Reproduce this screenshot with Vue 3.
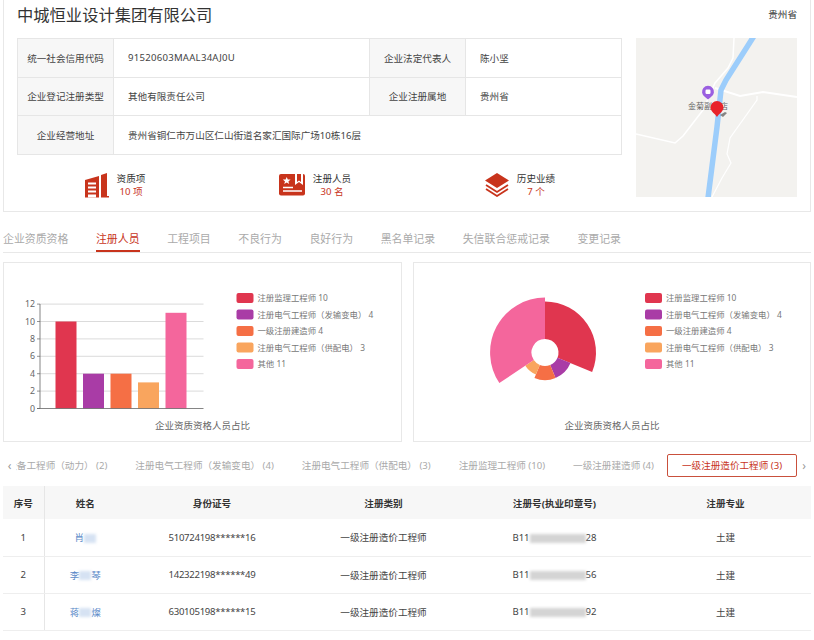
<template>
  <div class="page">
    <section class="company">
      <header class="company-head">
        <h1>中城恒业设计集团有限公司</h1>
        <span class="province">贵州省</span>
      </header>
      <div class="company-body">
        <div class="company-info">
          <table class="info-table">
            <colgroup>
              <col style="width: 96px" />
              <col style="width: 256px" />
              <col style="width: 96px" />
              <col />
            </colgroup>
            <tbody>
              <tr>
                <th>统一社会信用代码</th>
                <td class="code">91520603MAAL34AJ0U</td>
                <th>企业法定代表人</th>
                <td>陈小坚</td>
              </tr>
              <tr>
                <th>企业登记注册类型</th>
                <td>其他有限责任公司</td>
                <th>企业注册属地</th>
                <td>贵州省</td>
              </tr>
              <tr>
                <th>企业经营地址</th>
                <td colspan="3">贵州省铜仁市万山区仁山街道名家汇国际广场10栋16层</td>
              </tr>
            </tbody>
          </table>
          <div class="stats">
            <div class="stat">
              <svg class="stat-icon" width="24" height="26" viewBox="0 0 24 26">
                <path fill="#c8341c" d="M0 8 14 4V25.500H0z" />
                <path fill="#fff" d="M3 10.500h8v2H3zM3 14.500h8v2H3zM3 18.500h8v2H3zM3 22.500h8v3H3z" />
                <path fill="#c8341c" d="M16 3 22 1V24h2v1.500H16z" />
              </svg>
              <div class="stat-text"><span>资质项</span><b>10 项</b></div>
            </div>
            <div class="stat">
              <svg class="stat-icon" width="26" height="22" viewBox="0 0 26 22">
                <rect width="26" height="21.500" rx="2" fill="#c8341c" />
                <path fill="#fff" d="M16 0h8v11l-4-3-4 3z" />
                <path fill="#c8341c" d="M18 0h4v8l-2-1.500L18 8z" />
                <path fill="#fff" d="M7.700 3 8.800 5.600h2.800L9.400 7.400l.8 2.700-2.500-1.600-2.500 1.600.8-2.700L3.800 5.600h2.800zM4 12.800h10v1.500H4zM4 16.300h19v1.500H4z" />
              </svg>
              <div class="stat-text"><span>注册人员</span><b>30 名</b></div>
            </div>
            <div class="stat">
              <svg class="stat-icon" width="24" height="24" viewBox="0 0 24 24">
                <path fill="#c8341c" d="M12 0 24 7.500 12 15 0 7.500z" />
                <path fill="none" stroke="#c8341c" stroke-width="1.800" d="M1 12l11 7 11-7M1 16l11 7 11-7" />
              </svg>
              <div class="stat-text"><span>历史业绩</span><b>7 个</b></div>
            </div>
          </div>
        </div>
        <svg class="map" width="161" height="159" viewBox="0 0 161 159">
          <rect width="161" height="159" fill="#f3f2ef" />
          <g fill="none" stroke="#fff">
            <path stroke-width="1.500" d="M98 0 97 20 92 30 79 45 67 72 47 98 39 105 0 96" />
            <path stroke-width="2" d="M79 50 104 58 127 54 161 59" />
            <path stroke-width="1.200" d="M121 58V62L94 100 91 116 95 125 86 140 76 159" />
          </g>
          <path fill="none" stroke="#9ccdfb" stroke-width="5.500" d="M118 -2 90 42 85 52 81 89 72 160" />
          <path fill="#9a5fe0" d="M72 61.500 69 59a6 6 0 1 1 6 0z" />
          <rect x="69.500" y="51.500" width="5" height="4.500" rx="1.200" fill="#fff" />
          <text class="map-label" x="52" y="71">金菊副食店</text>
          <path fill="#555" opacity=".7" d="M84 77l5-3 2 1-4 4z" />
          <path fill="#e8232a" d="M81 79c-1.500-3-6.500-5.500-6.500-9.500a6.500 6.500 0 0 1 13 0c0 4-5 6.500-6.500 9.500z" />
        </svg>
      </div>
    </section>

    <nav class="tabs">
      <a v-for="tab in tabs" :key="tab" :class="{ active: tab === '注册人员' }">{{ tab }}</a>
    </nav>

    <div class="charts">
      <div class="chart-panel">
        <svg width="396" height="178" viewBox="0 0 396 178">
          <g v-for="tick in ticks" :key="tick">
            <line v-if="tick > 0" x1="36" x2="199.500" :y1="tickY(tick)" :y2="tickY(tick)" stroke="#ccc" stroke-width=".7" />
            <line x1="33" x2="36" :y1="tickY(tick)" :y2="tickY(tick)" stroke="#666" stroke-width=".7" />
            <text class="axis-label" x="31" :y="tickY(tick) + 3">{{ tick }}</text>
          </g>
          <rect
            v-for="(item, i) in legend"
            :key="item.name"
            :x="51.500 + i * 27.500"
            :y="tickY(item.value)"
            width="21"
            :height="item.value * barUnit"
            :fill="item.color"
          />
          <line x1="36" x2="36" y1="41" y2="145.500" stroke="#666" stroke-width=".8" />
          <line x1="33" x2="199.500" y1="145.500" y2="145.500" stroke="#666" stroke-width=".8" />
          <g v-for="(item, i) in legend" :key="item.name">
            <rect x="232.500" :y="30 + i * 16.500" width="17" height="10" rx="2" :fill="item.color" />
            <text class="legend-label" x="253.500" :y="38 + i * 16.500" xml:space="preserve">{{ item.name }}</text>
          </g>
          <text class="chart-title" x="198.500" y="166">企业资质资格人员占比</text>
        </svg>
      </div>
      <div class="chart-panel">
        <svg width="396" height="178" viewBox="0 0 396 178">
          <path v-for="seg in roseSegments" :key="seg.name" :d="seg.d" :fill="seg.color" />
          <g v-for="(item, i) in legend" :key="item.name">
            <rect x="231" :y="30 + i * 16.500" width="17" height="10" rx="2" :fill="item.color" />
            <text class="legend-label" x="252" :y="38 + i * 16.500" xml:space="preserve">{{ item.name }}</text>
          </g>
          <text class="chart-title" x="198" y="166">企业资质资格人员占比</text>
        </svg>
      </div>
    </div>

    <div class="sub-tabs">
      <span class="arrow">‹</span>
      <div class="sub-tab-strip">
        <a v-for="t in subTabs" :key="t" :class="{ active: t === activeSubTab }">{{ t }}</a>
      </div>
      <span class="arrow arrow-next">›</span>
    </div>

    <table class="people">
      <colgroup>
        <col style="width: 41px" />
        <col style="width: 82px" />
        <col style="width: 172px" />
        <col style="width: 171px" />
        <col style="width: 171px" />
        <col />
      </colgroup>
      <thead>
        <tr>
          <th>序号</th>
          <th>姓名</th>
          <th>身份证号</th>
          <th>注册类别</th>
          <th>注册号(执业印章号)</th>
          <th>注册专业</th>
        </tr>
      </thead>
      <tbody>
        <tr v-for="(p, i) in people" :key="p.id">
          <td>{{ i + 1 }}</td>
          <td class="name">{{ p.first }}<i class="name-mask"></i>{{ p.last }}</td>
          <td class="id-no">{{ p.id }}</td>
          <td>一级注册造价工程师</td>
          <td>B11<i class="reg-mask"></i>{{ p.reg }}</td>
          <td>土建</td>
        </tr>
      </tbody>
    </table>
  </div>
</template>

<script setup>
import { computed } from 'vue';

const tabs = ['企业资质资格', '注册人员', '工程项目', '不良行为', '良好行为', '黑名单记录', '失信联合惩戒记录', '变更记录'];

const subTabs = [
  '注册设备工程师（动力） (2)',
  '注册电气工程师（发输变电） (4)',
  '注册电气工程师（供配电） (3)',
  '注册监理工程师 (10)',
  '一级注册建造师 (4)',
  '一级注册造价工程师 (3)',
];
const activeSubTab = subTabs[5];

const legend = [
  { name: '注册监理工程师 10', value: 10, color: '#e0364f' },
  { name: '注册电气工程师（发输变电） 4', value: 4, color: '#a93ca6' },
  { name: '一级注册建造师 4', value: 4, color: '#f56f45' },
  { name: '注册电气工程师（供配电） 3', value: 3, color: '#f9a55e' },
  { name: '其他 11', value: 11, color: '#f4669c' },
];

const people = [
  { first: '肖', last: '', id: '510724198******16', reg: '28' },
  { first: '李', last: '琴', id: '142322198******49', reg: '56' },
  { first: '蒋', last: '燦', id: '630105198******15', reg: '92' },
];

const ticks = [0, 2, 4, 6, 8, 10, 12];
const barUnit = 8.7;
const tickY = (v) => 145.5 - v * barUnit;

const polar = (cx, cy, r, deg) => {
  const a = (deg * Math.PI) / 180;
  return [(cx + r * Math.sin(a)).toFixed(2), (cy - r * Math.cos(a)).toFixed(2)];
};

// rose chart: angle follows the value, and so does the outer radius
const roseSegments = computed(() => {
  const cx = 131;
  const cy = 89.5;
  const inner = 13.5;
  const total = legend.reduce((sum, item) => sum + item.value, 0);
  let start = 0;
  return legend.map((item) => {
    const end = start + (item.value / total) * 360;
    const outer = 12 + 3.9 * item.value;
    const large = end - start > 180 ? 1 : 0;
    const p1 = polar(cx, cy, outer, start);
    const p2 = polar(cx, cy, outer, end);
    const p3 = polar(cx, cy, inner, end);
    const p4 = polar(cx, cy, inner, start);
    const d = `M${p1}A${outer} ${outer} 0 ${large} 1 ${p2}L${p3}A${inner} ${inner} 0 ${large} 0 ${p4}Z`;
    start = end;
    return { name: item.name, color: item.color, d };
  });
});
</script>

<style>
body {
  background: #fff;
}
</style>

<style scoped>
.page {
  width: 814px;
  height: 640px;
  overflow: hidden;
  padding: 0 3px;
  box-sizing: border-box;
  font-family: "Noto Sans", "Noto Sans CJK SC", sans-serif;
  font-size: 9.6px;
  color: #444;
}
.company {
  border: 1px solid #e8e8e8;
  border-top: 0;
  padding: 0 13px 14px;
  height: 212px;
  box-sizing: border-box;
}
.company-head {
  height: 38px;
  padding-bottom: 10px;
  box-sizing: border-box;
  display: flex;
  align-items: center;
  justify-content: space-between;
}
.company-head h1 {
  margin: 0;
  font-size: 16.3px;
  font-weight: 400;
  color: #333;
}
.province {
  color: #333;
}
.company-body {
  display: flex;
  gap: 14px;
}
.company-info {
  width: 605px;
}
.map {
  display: block;
  flex: none;
}
.map-label {
  font-size: 8px;
  fill: #666;
}
.info-table {
  width: 605px;
  table-layout: fixed;
  border-collapse: collapse;
}
.info-table th,
.info-table td {
  height: 38.5px;
  padding: 0;
  box-sizing: border-box;
  border: 1px solid #e6e6e6;
}
.info-table th {
  background: #f7f7f7;
  font-weight: 400;
  text-align: center;
}
.info-table td {
  padding-left: 14px;
}
.info-table td.code {
  letter-spacing: .25px;
}
.stats {
  display: grid;
  grid-template-columns: 200px 200px 210px;
  margin: 17px 0 0 -2px;
}
.stat {
  display: flex;
  align-items: center;
  justify-content: center;
  gap: 8px;
}
.stat-icon {
  flex: none;
}
.stat-text {
  display: flex;
  flex-direction: column;
  align-items: center;
  line-height: 13px;
  color: #333;
}
.stat-text b {
  font-weight: 400;
  color: #c8341c;
}
.tabs {
  display: flex;
  gap: 27.600px;
  height: 25px;
  margin-top: 15px;
  border-bottom: 1px solid #e8e8e8;
  font-size: 10.900px;
  color: #aaa;
}
.tabs a {
  height: 25px;
  line-height: 24px;
  box-sizing: border-box;
}
.tabs a.active {
  color: #c8341c;
  border-bottom: 2px solid #c8341c;
}
.charts {
  display: flex;
  gap: 11px;
  margin-top: 9px;
}
.chart-panel {
  flex: 1 1 0;
  min-width: 0;
  height: 180px;
  box-sizing: border-box;
  border: 1px solid #e8e8e8;
}
.chart-panel svg {
  display: block;
}
.axis-label {
  font-size: 8.800px;
  fill: #666;
  text-anchor: end;
}
.legend-label {
  font-size: 8.400px;
  fill: #777;
}
.chart-title {
  font-size: 9.500px;
  fill: #666;
  text-anchor: middle;
}
.sub-tabs {
  display: flex;
  align-items: center;
  height: 24px;
  margin-top: 11px;
  color: #aaa;
}
.arrow {
  width: 13px;
  flex: none;
  font-size: 12px;
  text-align: center;
  color: #999;
}
.arrow-next {
  width: 14px;
}
.sub-tab-strip {
  flex: 1;
  min-width: 0;
  display: flex;
  justify-content: flex-end;
  align-items: center;
  overflow: hidden;
  gap: 28px;
  white-space: nowrap;
}
.sub-tab-strip a {
  flex: none;
}
.sub-tab-strip a.active {
  width: 130px;
  height: 23px;
  line-height: 21px;
  box-sizing: border-box;
  text-align: center;
  color: #c8341c;
  border: 1px solid #c9503c;
  border-radius: 2px;
  margin-left: -15px;
}
.people {
  width: 808px;
  margin-top: 9px;
  table-layout: fixed;
  border-collapse: collapse;
  text-align: center;
}
.people th {
  height: 33px;
  padding: 0;
  background: #f7f7f7;
  font-weight: 700;
  color: #333;
}
.people td {
  height: 37px;
  padding: 0;
  box-sizing: border-box;
  border-bottom: 1px solid #eee;
}
.people th:first-child,
.people td:first-child {
  border-right: 1px solid #e6e6e6;
}
.people td.id-no {
  letter-spacing: -.3px;
}
.name {
  color: #5a8ac8;
}
.name-mask {
  display: inline-block;
  width: 12px;
  height: 9px;
  vertical-align: middle;
  background: #d6e2f3;
  filter: blur(1.500px);
}
.reg-mask {
  display: inline-block;
  width: 56px;
  height: 9px;
  vertical-align: middle;
  background: #d4d4d4;
  filter: blur(1.500px);
}
</style>
